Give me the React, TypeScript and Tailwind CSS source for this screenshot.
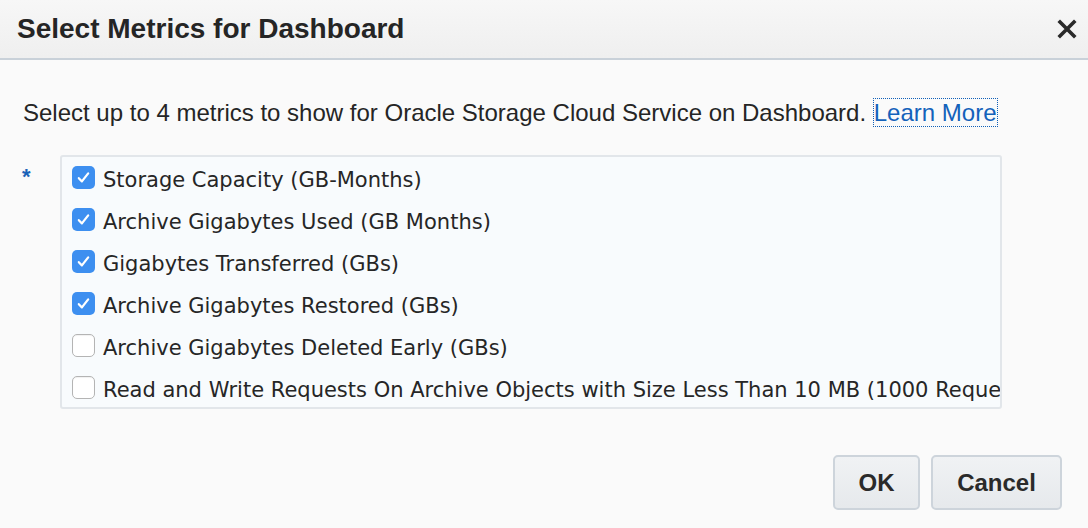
import { useState } from "react";

const METRICS = [
  { label: "Storage Capacity (GB-Months)", on: true },
  { label: "Archive Gigabytes Used (GB Months)", on: true },
  { label: "Gigabytes Transferred (GBs)", on: true },
  { label: "Archive Gigabytes Restored (GBs)", on: true },
  { label: "Archive Gigabytes Deleted Early (GBs)", on: false },
  { label: "Read and Write Requests On Archive Objects with Size Less Than 10 MB (1000 Requests)", on: false },
];

function Check({ on }: { on: boolean }) {
  return on ? (
    <span className="flex h-[23px] w-[23px] shrink-0 items-center justify-center rounded-[5px] bg-[#3d8ff0]">
      <svg viewBox="0 0 16 16" className="h-[17px] w-[17px]">
        <path d="M3.6 8.6l2.9 3.1 5.9-7.6" fill="none" stroke="#fff" strokeWidth="2.1" strokeLinecap="round" strokeLinejoin="round" />
      </svg>
    </span>
  ) : (
    <span className="h-[23px] w-[23px] shrink-0 rounded-[5px] border border-[#b4b4b4] bg-white shadow-[inset_0_1px_1px_rgba(0,0,0,0.06)]" />
  );
}

export default function App() {
  const [checked, setChecked] = useState(METRICS.map((m) => m.on));

  return (
    <div className="flex h-[528px] w-[1088px] flex-col bg-[#fafafa] font-['Liberation_Sans',Arial,sans-serif] text-[#252525]">
      <div className="flex h-[60px] shrink-0 items-center justify-between border-b-2 border-[#c9d1d9] bg-gradient-to-b from-[#f7f7f7] to-[#efefef] pl-[17px] pr-[11px]">
        <h1 className="text-[28px] font-bold leading-none">Select Metrics for Dashboard</h1>
        <svg viewBox="0 0 20 20" className="h-[20px] w-[20px]">
          <path d="M3 3l14 14M17 3L3 17" stroke="#2a2a2a" strokeWidth="3.6" strokeLinecap="square" />
        </svg>
      </div>

      <p className="mt-[39px] pl-[23px] text-[24px] leading-[28px]">
        Select up to 4 metrics to show for Oracle Storage Cloud Service on Dashboard.{" "}
        <a href="#" className="border border-dotted border-[#1060b8] text-[#1462bb] outline-none">
          Learn More
        </a>
      </p>

      <div className="mt-[28px] flex pl-[22px]">
        <span className="w-[38px] pt-[11px] text-[22px] font-bold leading-none text-[#1a62b8]">*</span>
        <div className="h-[254px] w-[942px] overflow-hidden rounded-[3px] border-2 border-[#e2e6ea] bg-[#f8fbfd] pl-[10px] pt-[9px]">
          {METRICS.map((m, i) => (
            <label
              key={m.label}
              className="flex h-[42px] cursor-pointer items-start gap-[8px] whitespace-nowrap"
              onClick={() => setChecked((c) => c.map((v, j) => (j === i ? !v : v)))}
            >
              <Check on={checked[i]} />
              <span className="pt-[2px] font-['DejaVu_Sans',Verdana,sans-serif] text-[21px] leading-[24px] text-[#262626]">
                {m.label}
              </span>
            </label>
          ))}
        </div>
      </div>

      <div className="mt-auto mb-[18px] flex justify-end gap-[11px] pr-[26px]">
        <button className="h-[55px] w-[87px] rounded-[5px] border-2 border-[#cdd4db] bg-gradient-to-b from-[#f0f2f4] to-[#e6e9ec] text-[24px] font-bold text-[#2a2a2a]">
          OK
        </button>
        <button className="h-[55px] w-[131px] rounded-[5px] border-2 border-[#cdd4db] bg-gradient-to-b from-[#f0f2f4] to-[#e6e9ec] text-[24px] font-bold text-[#2a2a2a]">
          Cancel
        </button>
      </div>
    </div>
  );
}
